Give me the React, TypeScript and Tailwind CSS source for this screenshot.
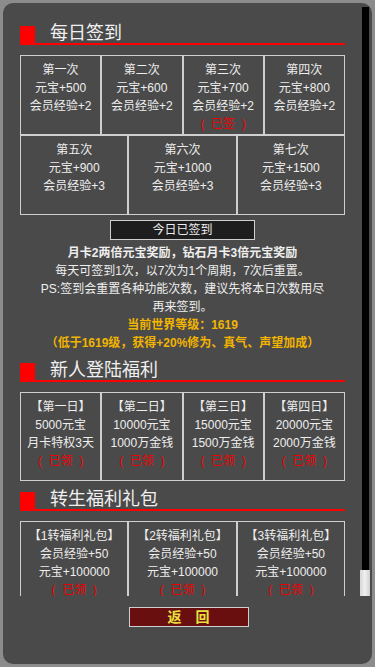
const FONT = "font-['Liberation_Sans','Noto_Sans_CJK_SC',sans-serif]";

const firstRow = [
  { title: "第一次", gold: "元宝+500", exp: "会员经验+2" },
  { title: "第二次", gold: "元宝+600", exp: "会员经验+2" },
  { title: "第三次", gold: "元宝+700", exp: "会员经验+2", signed: true },
  { title: "第四次", gold: "元宝+800", exp: "会员经验+2" },
];

const secondRow = [
  { title: "第五次", gold: "元宝+900", exp: "会员经验+3" },
  { title: "第六次", gold: "元宝+1000", exp: "会员经验+3" },
  { title: "第七次", gold: "元宝+1500", exp: "会员经验+3" },
];

const newbie = [
  { day: "【第一日】", a: "5000元宝", b: "月卡特权3天" },
  { day: "【第二日】", a: "10000元宝", b: "1000万金钱" },
  { day: "【第三日】", a: "15000元宝", b: "1500万金钱" },
  { day: "【第四日】", a: "20000元宝", b: "2000万金钱" },
];

const rebirth = ["【1转福利礼包】", "【2转福利礼包】", "【3转福利礼包】"];

const Heading = ({ title }: { title: string }) => (
  <div className="flex h-[19px] items-end border-b-2 border-[#ff0000]">
    <div className="h-[17px] w-[15px] bg-[#ff0000]" />
    <span className="ml-[15px] text-[18px] leading-[19px] text-[#f0f0f0]">
      {title}
    </span>
  </div>
);

const Mark = ({ text }: { text: string }) => (
  <div className="text-[#ee0000]">(&nbsp;&nbsp;{text}&nbsp;&nbsp;)</div>
);

const cell =
  "border border-[#cfcfcf] pt-[5px] text-center text-[12px] leading-[18px] text-[#eeeeee]";

export default function App() {
  return (
    <div className={`min-h-[667px] bg-[#8c8c8c] p-[3px] ${FONT}`}>
      <div className="h-[661px] rounded-[10px] bg-[#4a4a4a] pt-[4px] pl-[4px] pr-[2px]">
        <div className="flex h-[589px]">
          <div className="flex-1 overflow-hidden pl-[13px] pt-[19px]">
            <div className="w-[325px]">
              <Heading title="每日签到" />

              <div className="mt-[10px] grid grid-cols-4">
                {firstRow.map((c) => (
                  <div key={c.title} className={`${cell} h-[80px]`}>
                    <div>{c.title}</div>
                    <div>{c.gold}</div>
                    <div>{c.exp}</div>
                    {c.signed && <Mark text="已签" />}
                  </div>
                ))}
              </div>
              <div className="grid grid-cols-3">
                {secondRow.map((c) => (
                  <div key={c.title} className={`${cell} h-[80px]`}>
                    <div>{c.title}</div>
                    <div>{c.gold}</div>
                    <div>{c.exp}</div>
                  </div>
                ))}
              </div>

              <div className="mx-auto mt-[5px] flex h-[20px] w-[145px] items-center justify-center border border-[#cfcfcf] bg-[#1e1e1e] text-[12px] text-[#eeeeee]">
                今日已签到
              </div>

              <div className="mx-auto mt-[4px] w-[292px] text-center text-[12px] leading-[18px] text-[#eeeeee]">
                <p className="font-bold">月卡2两倍元宝奖励，钻石月卡3倍元宝奖励</p>
                <p>每天可签到1次，以7次为1个周期，7次后重置。</p>
                <p>PS:签到会重置各种功能次数，建议先将本日次数用尽再来签到。</p>
                <p className="font-bold text-[#f2b400]">当前世界等级：1619</p>
                <p className="font-bold text-[#f2b400]">
                  （低于1619级，获得+20%修为、真气、声望加成）
                </p>
              </div>

              <div className="mt-[11px]">
                <Heading title="新人登陆福利" />
              </div>
              <div className="mt-[10px] grid grid-cols-4">
                {newbie.map((c) => (
                  <div key={c.day} className={`${cell} h-[89px]`}>
                    <div>{c.day}</div>
                    <div>{c.a}</div>
                    <div>{c.b}</div>
                    <Mark text="已领" />
                  </div>
                ))}
              </div>

              <div className="mt-[11px]">
                <Heading title="转生福利礼包" />
              </div>
              <div className="mt-[10px] grid grid-cols-3">
                {rebirth.map((t) => (
                  <div key={t} className={`${cell} h-[89px]`}>
                    <div>{t}</div>
                    <div>会员经验+50</div>
                    <div>元宝+100000</div>
                    <Mark text="已领" />
                  </div>
                ))}
              </div>
            </div>
          </div>

          <div className="flex w-[10px] flex-col">
            <div className="ml-[2px] mr-[1px] flex-1 bg-black" />
            <div className="h-[26px] bg-gradient-to-r from-[#d8d8d8] via-[#f0f0f0] to-[#d0d0d0]" />
          </div>
        </div>

        <div className="mt-[11px] flex justify-center">
          <button className="h-[20px] w-[120px] border border-[#cfcfcf] bg-[#6a0f0f] text-[14px] font-bold leading-[18px] text-[#e8e040]">
            返　回
          </button>
        </div>
      </div>
    </div>
  );
}
